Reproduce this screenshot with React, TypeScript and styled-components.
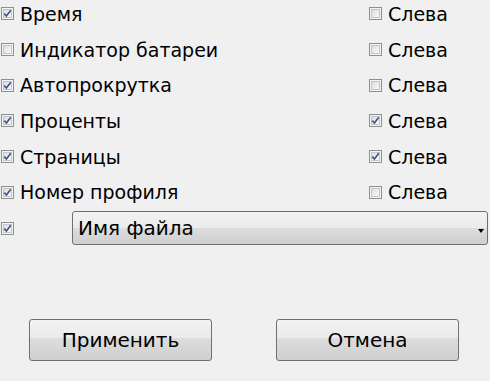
import React from "react";
import styled, { createGlobalStyle } from "styled-components";

const Global = createGlobalStyle`
  html, body { margin: 0; padding: 0; background: #f0f0f0; }
  body { font-family: "DejaVu Sans", "Liberation Sans", sans-serif; color: #000; overflow: hidden; }
`;

const Page = styled.div`
  width: 490px;
  height: 381px;
  background: #f0f0f0;
  display: flex;
  flex-direction: column;
`;

const List = styled.div`
  margin-top: -4px;
  display: grid;
  grid-template-columns: 368px 1fr;
  grid-auto-rows: 35.7px;
`;

const Cell = styled.label`
  display: flex;
  align-items: center;
  gap: 6px;
  padding-left: 1px;
  font-size: 19px;
  white-space: nowrap;
`;

const ComboRow = styled.div`
  margin-top: 1px;
  display: flex;
  align-items: center;
  padding-left: 1px;
  gap: 58px;
`;

const Combo = styled.div`
  position: relative;
  width: 416px;
  height: 34px;
  box-sizing: border-box;
  border: 1px solid #707070;
  border-radius: 3px;
  background: linear-gradient(#f2f2f2 0%, #ebebeb 50%, #dddddd 50%, #cfcfcf 100%);
  display: flex;
  align-items: center;
  padding-left: 5px;
  font-size: 20px;
`;

const Arrow = styled.span`
  position: absolute;
  right: 3px;
  top: 17px;
  width: 0;
  height: 0;
  border-left: 3.5px solid transparent;
  border-right: 3.5px solid transparent;
  border-top: 4px solid #000;
`;

const Buttons = styled.div`
  margin-top: 74px;
  display: flex;
  padding-left: 29px;
  gap: 64px;
`;

const Button = styled.button`
  width: 183px;
  height: 42px;
  box-sizing: border-box;
  border: 1px solid #707070;
  border-radius: 3px;
  background: linear-gradient(#f2f2f2 0%, #ebebeb 45%, #dddddd 45%, #cfcfcf 100%);
  font-family: "DejaVu Sans", "Liberation Sans", sans-serif;
  font-size: 20px;
  color: #000;
  padding: 0;
`;

const Check: React.FC<{ checked?: boolean }> = ({ checked }) => (
  <svg width="13" height="13" viewBox="0 0 13 13">
    <defs>
      <linearGradient id={checked ? "gc" : "gu"} x1="0" y1="0" x2="1" y2="1">
        <stop offset="0" stopColor="#dcdcdc" />
        <stop offset="1" stopColor="#fbfbfb" />
      </linearGradient>
    </defs>
    <rect x="0.5" y="0.5" width="12" height="12" fill="#f4f4f4" stroke="#8e8f8f" />
    <rect x="2.5" y="2.5" width="8" height="8" fill={`url(#${checked ? "gc" : "gu"})`} stroke="#c5c5c5" strokeWidth="1" />
    {checked && (
      <path d="M3.3 6.6 L5.4 9 L9.8 3.2" fill="none" stroke="#3c5294" strokeWidth="1.6" />
    )}
  </svg>
);

const rows: { label: string; left: boolean; right: boolean }[] = [
  { label: "Время", left: true, right: false },
  { label: "Индикатор батареи", left: false, right: false },
  { label: "Автопрокрутка", left: true, right: false },
  { label: "Проценты", left: true, right: true },
  { label: "Страницы", left: true, right: true },
  { label: "Номер профиля", left: true, right: false },
];

export default function App() {
  return (
    <Page>
      <Global />
      <List>
        {rows.map((r) => (
          <React.Fragment key={r.label}>
            <Cell>
              <Check checked={r.left} />
              {r.label}
            </Cell>
            <Cell>
              <Check checked={r.right} />
              Слева
            </Cell>
          </React.Fragment>
        ))}
      </List>
      <ComboRow>
        <Check checked />
        <Combo>
          Имя файла
          <Arrow />
        </Combo>
      </ComboRow>
      <Buttons>
        <Button>Применить</Button>
        <Button>Отмена</Button>
      </Buttons>
    </Page>
  );
}
